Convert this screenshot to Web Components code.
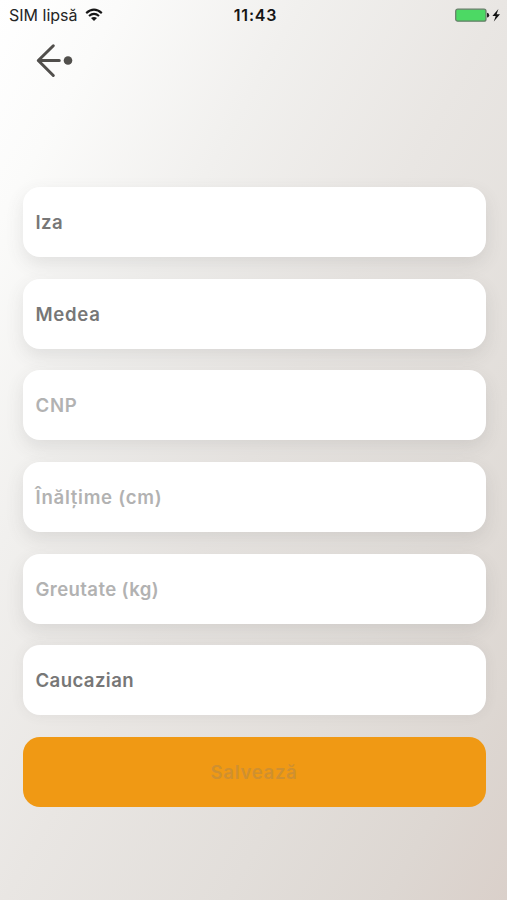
<!DOCTYPE html>
<html lang="ro"><head><meta charset="utf-8"><title>Profil</title>
<style>html,body{margin:0;height:100%;overflow:hidden}</style></head>
<body>
<profile-screen>
  <status-bar slot="status">
    <fit-text slot="carrier" width="68.5">SIM lipsă</fit-text>
    <fit-text slot="time" width="43.5">11:43</fit-text>
  </status-bar>
  <back-button slot="nav"></back-button>
  <form-field><fit-text width="27.5">Iza</fit-text></form-field>
  <form-field><fit-text width="65">Medea</fit-text></form-field>
  <form-field empty><fit-text width="42">CNP</fit-text></form-field>
  <form-field empty><fit-text width="127">Înălțime (cm)</fit-text></form-field>
  <form-field empty><fit-text width="123.5">Greutate (kg)</fit-text></form-field>
  <form-field flat><fit-text width="98.5">Caucazian</fit-text></form-field>
  <save-button><fit-text width="87">Salvează</fit-text></save-button>
</profile-screen>
<script>
const define = (name, html, ready) => customElements.define(name, class extends HTMLElement {
  constructor() {
    super();
    this.attachShadow({mode: 'open'}).innerHTML = html;
  }
  connectedCallback() { if (ready) ready(this); }
});

define('profile-screen', `<style>
:host{display:flex;flex-direction:column;height:900px;font-family:Inter,sans-serif;
background:linear-gradient(119deg,#fff 0%,#fbfbfa 12%,#f1f0ee 30%,#e9e6e3 50%,#e2deda 72%,#ddd7d2 88%,#dad0ca 100%)}
main{display:flex;flex-direction:column;gap:21.7px;padding:95px 21.5px 0 22.5px}
</style><slot name="status"></slot><slot name="nav"></slot><main><slot></slot></main>`);

define('status-bar', `<style>
:host{display:grid;grid-template-columns:1fr auto 1fr;align-items:center;height:30px;padding:0 6px 0 9px;box-sizing:border-box;color:#252525;font-size:16px;line-height:30px}
div{display:flex;align-items:center}
.left{gap:7px}.right{justify-content:flex-end}
.time{font-weight:600;color:#151515;padding-left:1px}
svg{display:block}
</style>
<div class="left"><slot name="carrier"></slot>
<svg width="18" height="14" viewBox="0 0 18 14" fill="none" stroke="#171717" stroke-width="2.1"><path d="M1.2 5.1Q9-1.8 16.8 5.1M4 8Q9 3.7 14 8"/><path d="M9 13L6 10.1Q9 7.7 12 10.1Z" fill="#171717" stroke="none"/></svg></div>
<div class="time"><slot name="time"></slot></div>
<div class="right"><svg width="46" height="16" viewBox="0 0 46 16"><rect x=".7" y="2.2" width="30.3" height="12" rx="2" fill="#4cd964" stroke="#667c68" stroke-width="1.2"/><path d="M32 5.8Q34.2 6 34.2 8.2T32 10.6Z" fill="#222"/><path d="M43.4 2L37.4 9H40.7L38.8 14.4L45 7.2H41.6Z" fill="#111"/></svg></div>`);

define('back-button', `<style>:host{display:block;height:62px;padding:13px 0 0 36px;box-sizing:border-box}svg{display:block}</style>
<svg width="38" height="36" viewBox="0 0 38 36" fill="none" stroke="#514f4c" stroke-width="3" stroke-linecap="round" stroke-linejoin="round"><path d="M17.3 2.8L2.3 17.5L17.3 32.5M2.3 17.5H23.3"/><circle cx="32" cy="17.5" r="4.3" fill="#514f4c" stroke="none"/></svg>`);

define('form-field', `<style>
:host{display:flex;align-items:center;height:70px;box-sizing:border-box;padding:0 13px;border-radius:17px;background:#fff;color:#777;font-size:18.6px;font-weight:600;box-shadow:0 7px 18px rgba(70,70,70,.12)}
:host([empty]){color:#b2b2b2}
:host([flat]){box-shadow:0 0 14px rgba(70,70,70,.07)}
</style><slot></slot>`);

define('save-button', `<style>
:host{display:flex;align-items:center;justify-content:center;height:70px;border-radius:17px;background:#f09914;color:#cf9030;font-size:18.6px;font-weight:600}
</style><slot></slot>`);

// Spreads the letters so that the label takes up its nominal width.
define('fit-text', `<style>:host{display:inline-block;white-space:nowrap}</style><slot></slot>`, el => {
  const target = +el.getAttribute('width');
  const spacing = (target - el.getBoundingClientRect().width) / el.textContent.length;
  el.style.letterSpacing = spacing.toFixed(3) + 'px';
});
</script>
</body></html>
